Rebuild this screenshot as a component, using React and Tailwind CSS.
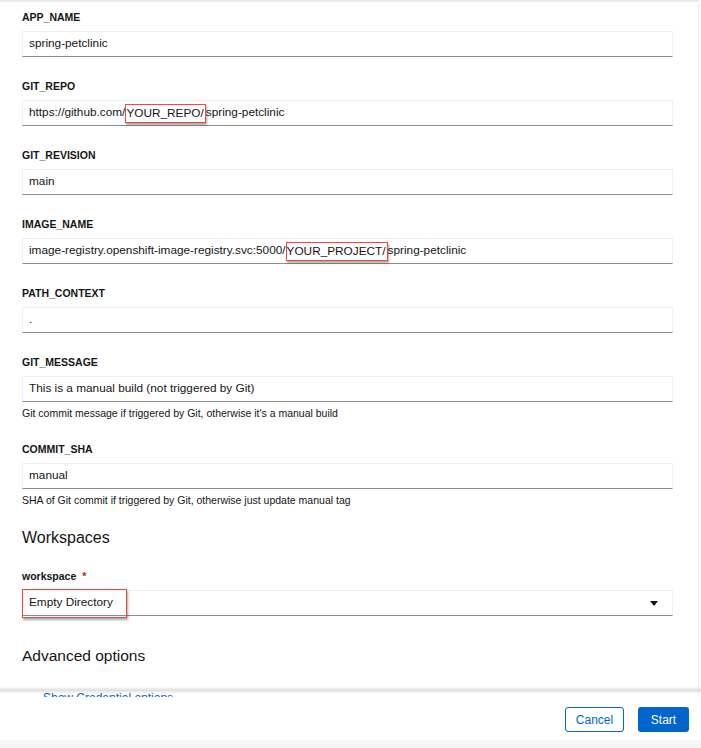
import React from "react";

const Label = ({ children, required }) => (
  <div className="text-[10.5px] leading-[14px] font-bold text-[#151515] mb-[7px]">
    {children}
    {required && <span className="text-[#c9190b] ml-[6px]">*</span>}
  </div>
);

const Box = ({ children }) => (
  <div className="h-[26px] border border-[#f0f0f0] border-b-[#8a8d90] flex items-center pl-[6px] text-[11.8px] text-[#151515] whitespace-nowrap">
    {children}
  </div>
);

const Mark = ({ children }) => (
  <span className="border border-[#ee4b3d] shadow-[1px_2px_2px_rgba(0,0,0,0.35)] pr-[1px] leading-[17px]">
    {children}
  </span>
);

const Field = ({ label, value, helper, last }) => (
  <div className={last ? "mb-[19px]" : "mb-[22px]"}>
    <Label>{label}</Label>
    <Box>{value}</Box>
    {helper && (
      <div className="mt-[4px] text-[10.5px] leading-[14px] text-[#151515]">{helper}</div>
    )}
  </div>
);

const App = () => {
  return (
    <div className="w-[701px] h-[748px] bg-white relative overflow-hidden flex flex-col font-['Liberation_Sans',Arial,sans-serif]">
      <div className="absolute top-0 left-0 w-[699px] h-[3px] bg-gradient-to-b from-[#e2e2e2] to-white" />

      <div className="h-[697px] w-[699px] overflow-hidden border-r border-[#ececec] pl-[22px] pr-[25px] pt-[10px]">
        <Field label="APP_NAME" value="spring-petclinic" />
        <Field
          label="GIT_REPO"
          value={
            <>
              https://github.com/<Mark>YOUR_REPO/</Mark>spring-petclinic
            </>
          }
        />
        <Field label="GIT_REVISION" value="main" />
        <Field
          label="IMAGE_NAME"
          value={
            <>
              image-registry.openshift-image-registry.svc:5000/<Mark>YOUR_PROJECT/</Mark>spring-petclinic
            </>
          }
        />
        <Field label="PATH_CONTEXT" value="." />
        <Field
          label="GIT_MESSAGE"
          value="This is a manual build (not triggered by Git)"
          helper="Git commit message if triggered by Git, otherwise it's a manual build"
        />
        <Field
          label="COMMIT_SHA"
          value="manual"
          helper="SHA of Git commit if triggered by Git, otherwise just update manual tag"
          last
        />

        <h2 className="text-[16px] leading-[24px] text-[#151515] mb-[19px]">Workspaces</h2>

        <Label required>workspace</Label>
        <div className="h-[26px] border border-[#f0f0f0] border-b-[#8a8d90] flex items-center justify-between pr-[14px] text-[11.8px] text-[#151515]">
          <span className="border border-[#ee4b3d] shadow-[1px_2px_2px_rgba(0,0,0,0.35)] h-[29px] w-[105px] -ml-[1px] pl-[6px] flex items-center">
            Empty Directory
          </span>
          <svg width="8" height="5" viewBox="0 0 8 5">
            <path d="M0 0h8L4 5z" fill="#151515" />
          </svg>
        </div>

        <h2 className="mt-[28px] text-[15.5px] leading-[24px] text-[#151515]">Advanced options</h2>
        <div className="mt-[22px] pl-[21px] text-[12px] leading-[16px] text-[#0066cc]">
          Show Credential options
        </div>
      </div>

      <div className="absolute left-0 top-[687px] w-[701px] h-[6px] bg-gradient-to-b from-[rgba(255,255,255,0)] via-[rgba(200,200,200,0.6)] to-[rgba(235,235,235,0.3)]" />

      <div className="flex-1 flex justify-end items-start gap-[14px] pt-[10px] pr-[12px]">
        <button className="h-[25px] w-[59px] rounded-[3px] border border-[#0066cc] text-[#0066cc] text-[12px]">
          Cancel
        </button>
        <button className="h-[25px] w-[51px] rounded-[3px] bg-[#0066cc] text-white text-[12px]">
          Start
        </button>
      </div>
      <div className="h-[8px] bg-gradient-to-b from-[#fafafa] to-[#f3f3f3]" />
    </div>
  );
};

export default App;
